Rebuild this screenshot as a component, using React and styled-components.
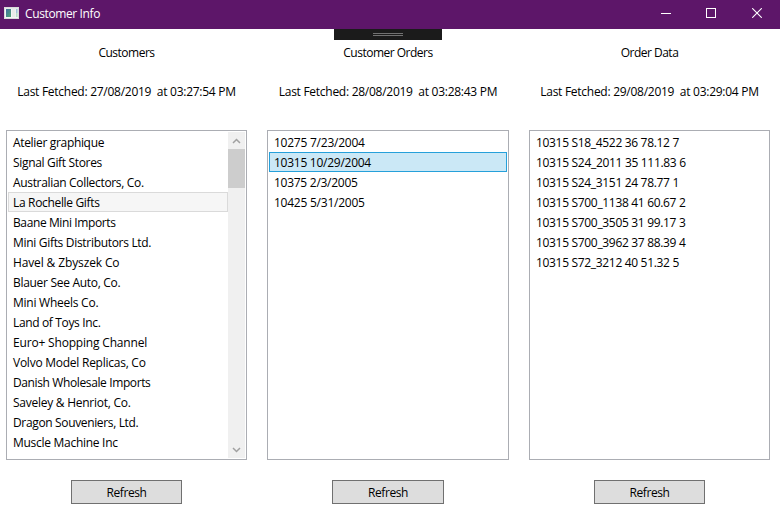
import React from 'react';
import styled, { createGlobalStyle } from 'styled-components';

const GlobalStyle = createGlobalStyle`
  *, *::before, *::after { box-sizing: border-box; }
  body { margin: 0; background: #fff; }
`;

const Window = styled.div`
  width: 780px;
  height: 513px;
  display: flex;
  flex-direction: column;
  position: relative;
  overflow: hidden;
  background: #fff;
  color: #000;
  font-family: 'Open Sans', 'Noto Sans', sans-serif;
  font-size: 12px;
  line-height: 16px;
`;

const TitleBar = styled.header`
  height: 29px;
  flex: none;
  display: flex;
  align-items: center;
  padding-left: 4px;
  background: #5d1669;
  color: #fff;
`;

const AppIcon = styled.svg`
  width: 15px;
  height: 12px;
  display: block;
  margin-bottom: 3px;
`;

const Title = styled.h1`
  flex: 1;
  margin: 0 0 1px 6px;
  font-size: inherit;
  font-weight: 400;
  letter-spacing: -0.38px;
`;

const CaptionButton = styled.button`
  width: 46px;
  height: 29px;
  padding: 0 0 3px;
  border: 0;
  display: flex;
  align-items: center;
  justify-content: center;
  background: transparent;
  color: inherit;

  svg { display: block; }
`;

const DebugHandle = styled.div`
  position: absolute;
  top: 29px;
  left: 334px;
  width: 108px;
  height: 11px;
  padding-top: 4px;
  display: flex;
  justify-content: center;
  background: #1b1b1b;

  &::before {
    content: '';
    width: 30px;
    height: 3px;
    border: solid #717171;
    border-width: 1px 0;
  }
`;

const Columns = styled.main`
  display: grid;
  grid-template-columns: 241px 242px 241px;
  column-gap: 20px;
  padding: 16px 0 0 6px;
`;

const Column = styled.section`
  display: flex;
  flex-direction: column;
  align-items: center;
`;

const Heading = styled.h2`
  margin: 0;
  font-size: inherit;
  font-weight: 400;
  letter-spacing: -0.5px;
`;

const Fetched = styled.p`
  margin: 23px 0 30px;
  white-space: pre;
  letter-spacing: -0.27px;
`;

const ListBox = styled.div`
  width: 100%;
  height: 330px;
  padding: 1px;
  display: flex;
  border: 1px solid #abadb3;
`;

const Items = styled.ul`
  flex: 1;
  min-width: 0;
  margin: 0;
  padding: 0;
  list-style: none;
`;

const tones = {
  active: { fill: '#cbe8f6', line: '#26a0da' },
  inactive: { fill: '#f6f6f6', line: '#dadada' },
};

const Item = styled.li`
  height: 20px;
  padding: 2px 4px 0;
  border: 1px solid ${({ $tone }) => tones[$tone]?.line ?? 'transparent'};
  background: ${({ $tone }) => tones[$tone]?.fill ?? 'transparent'};
  white-space: nowrap;
  letter-spacing: ${({ $tracking }) => $tracking}px;
`;

const ScrollBar = styled.div`
  width: 17px;
  display: flex;
  flex-direction: column;
  background: #f0f0f0;
`;

const ScrollArrow = styled.div`
  height: 17px;
  display: flex;
  align-items: center;
  justify-content: center;
  color: #a0a0a0;

  svg { display: block; }
`;

const ScrollTrack = styled.div`
  flex: 1;
`;

const ScrollThumb = styled.div`
  height: 39px;
  background: #cdcdcd;
`;

const RefreshButton = styled.button`
  width: ${({ $width }) => $width}px;
  height: 24px;
  margin-top: 20px;
  padding: 1px 0 0;
  border: 1px solid #707070;
  background: #ddd;
  color: #000;
  font: inherit;
  letter-spacing: -0.42px;
`;

const columns = [
  {
    title: 'Customers',
    fetched: 'Last Fetched: 27/08/2019  at 03:27:54 PM',
    buttonWidth: 111,
    scroll: true,
    items: [
      ['Atelier graphique', -0.33],
      ['Signal Gift Stores', -0.33],
      ['Australian Collectors, Co.', -0.33],
      ['La Rochelle Gifts', -0.33, 'inactive'],
      ['Baane Mini Imports', -0.39],
      ['Mini Gifts Distributors Ltd.', -0.31],
      ['Havel & Zbyszek Co', -0.13],
      ['Blauer See Auto, Co.', -0.3],
      ['Mini Wheels Co.', -0.25],
      ['Land of Toys Inc.', -0.35],
      ['Euro+ Shopping Channel', -0.18],
      ['Volvo Model Replicas, Co', -0.25],
      ['Danish Wholesale Imports', -0.38],
      ['Saveley & Henriot, Co.', -0.26],
      ['Dragon Souveniers, Ltd.', -0.35],
      ['Muscle Machine Inc', -0.28],
    ],
  },
  {
    title: 'Customer Orders',
    fetched: 'Last Fetched: 28/08/2019  at 03:28:43 PM',
    buttonWidth: 112,
    items: [
      ['10275 7/23/2004', -0.24],
      ['10315 10/29/2004', -0.26, 'active'],
      ['10375 2/3/2005', -0.27],
      ['10425 5/31/2005', -0.24],
    ],
  },
  {
    title: 'Order Data',
    fetched: 'Last Fetched: 29/08/2019  at 03:29:04 PM',
    buttonWidth: 111,
    items: [
      ['10315 S18_4522 36 78.12 7', -0.32],
      ['10315 S24_2011 35 111.83 6', -0.31],
      ['10315 S24_3151 24 78.77 1', -0.32],
      ['10315 S700_1138 41 60.67 2', -0.32],
      ['10315 S700_3505 31 99.17 3', -0.32],
      ['10315 S700_3962 37 88.39 4', -0.32],
      ['10315 S72_3212 40 51.32 5', -0.32],
    ],
  },
];

const Chevron = ({ down }) => (
  <svg width="9" height="6" viewBox="0 0 9 6">
    <path
      d={down ? 'M1 1L4.5 4.5L8 1' : 'M1 5L4.5 1.5L8 5'}
      fill="none"
      stroke="currentColor"
      strokeWidth="1.5"
    />
  </svg>
);

export default function App() {
  return (
    <Window>
      <GlobalStyle />
      <TitleBar>
        <AppIcon viewBox="0 0 15 12">
          <defs>
            <linearGradient id="pane" x1="0" y1="0" x2="1" y2="1">
              <stop offset="0" stopColor="#3f6fa3" />
              <stop offset="1" stopColor="#52a573" />
            </linearGradient>
          </defs>
          <rect width="15" height="12" fill="#d9dadb" />
          <rect x="1" y="1.5" width="13" height="9.5" fill="#f4f5f5" />
          <rect x="2" y="2" width="5" height="8" fill="url(#pane)" />
          <rect x="8" y="2" width="3.5" height="8" fill="#e9eaea" />
          <rect x="12" y="2" width="1.6" height="4" fill="#9fc0d8" />
          <rect x="12" y="6" width="1.6" height="4" fill="#b5dcc8" />
        </AppIcon>
        <Title>Customer Info</Title>
        <CaptionButton aria-label="Minimize">
          <svg width="12" height="10" viewBox="0 0 12 10">
            <path d="M2 5.5H12" stroke="currentColor" />
          </svg>
        </CaptionButton>
        <CaptionButton aria-label="Maximize">
          <svg width="10" height="10" viewBox="0 0 10 10">
            <rect x="0.5" y="0.5" width="9" height="9" fill="none" stroke="currentColor" />
          </svg>
        </CaptionButton>
        <CaptionButton aria-label="Close">
          <svg width="10" height="10" viewBox="0 0 10 10">
            <path d="M0.2 0.2L9.8 9.8M9.8 0.2L0.2 9.8" stroke="currentColor" strokeWidth="1.1" />
          </svg>
        </CaptionButton>
      </TitleBar>
      <DebugHandle />
      <Columns>
        {columns.map((column) => (
          <Column key={column.title}>
            <Heading>{column.title}</Heading>
            <Fetched>{column.fetched}</Fetched>
            <ListBox>
              <Items>
                {column.items.map(([text, tracking, tone]) => (
                  <Item key={text} $tracking={tracking} $tone={tone}>
                    {text}
                  </Item>
                ))}
              </Items>
              {column.scroll && (
                <ScrollBar>
                  <ScrollArrow><Chevron /></ScrollArrow>
                  <ScrollTrack><ScrollThumb /></ScrollTrack>
                  <ScrollArrow><Chevron down /></ScrollArrow>
                </ScrollBar>
              )}
            </ListBox>
            <RefreshButton $width={column.buttonWidth}>Refresh</RefreshButton>
          </Column>
        ))}
      </Columns>
    </Window>
  );
}
